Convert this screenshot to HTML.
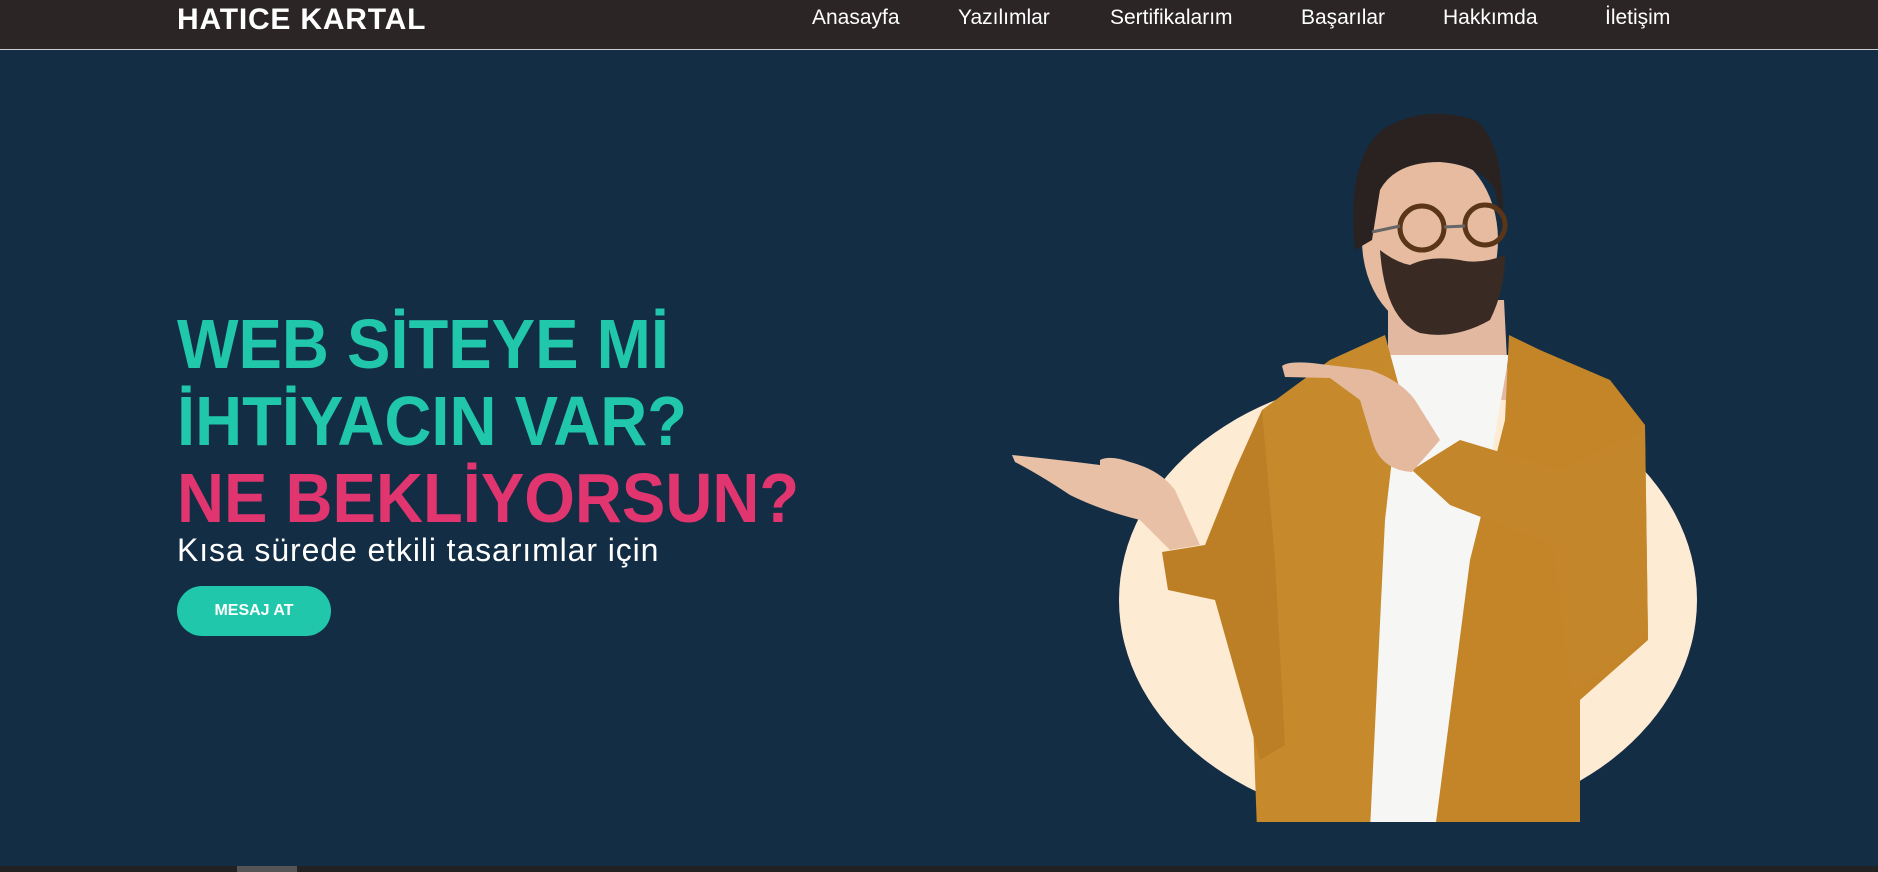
<!DOCTYPE html>
<html><head><meta charset="utf-8"><style>
*{margin:0;padding:0;box-sizing:border-box}
html,body{width:1878px;height:872px;overflow:hidden;background:#132d45;font-family:"Liberation Sans",sans-serif}
header{position:absolute;left:0;top:0;width:1878px;height:50px;background:#2b2526;border-bottom:1px solid #cfcfcf}
.logo{position:absolute;left:177px;top:3px;font-weight:bold;font-size:30px;color:#fff;letter-spacing:0.8px}
nav a{position:absolute;top:6px;color:#fff;font-size:21px;text-decoration:none}
h1{position:absolute;left:177px;top:306px;font-size:70px;line-height:77px;font-weight:bold;color:#21c7aa;transform:scaleX(0.93);transform-origin:0 0;white-space:nowrap}
h1 span{color:#e0356f}
.sub{position:absolute;left:177px;top:532px;font-size:32px;color:#fff;letter-spacing:0.9px}
.btn{position:absolute;left:177px;top:586px;width:154px;height:50px;border-radius:25px;background:#21c7aa;color:#fff;font-weight:bold;font-size:16px;text-align:center;line-height:50px}
.bar{position:absolute;left:0;top:866px;width:1878px;height:6px;background:#222}
.thumb{position:absolute;left:237px;top:866px;width:60px;height:6px;background:#555}
svg{position:absolute;left:0;top:0}
</style></head><body>
<header><div class="logo">HATICE KARTAL</div>
<nav><a style="left:812px">Anasayfa</a><a style="left:958px">Yazılımlar</a><a style="left:1110px">Sertifikalarım</a><a style="left:1301px">Başarılar</a><a style="left:1443px">Hakkımda</a><a style="left:1605px">İletişim</a></nav></header>
<h1>WEB SİTEYE Mİ<br>İHTİYACIN VAR?<br><span>NE BEKLİYORSUN?</span></h1>
<div class="sub">Kısa sürede etkili tasarımlar için</div>
<div class="btn">MESAJ AT</div>
<svg width="1878" height="866" viewBox="0 0 1878 866">
<clipPath id="c"><rect x="0" y="51" width="1878" height="771"/></clipPath>
<g clip-path="url(#c)">
<ellipse cx="1408" cy="600" rx="289" ry="225" fill="#fdebd4"/>
<path d="M1388 300 L1504 300 L1509 400 L1388 400Z" fill="#e2b9a0"/>
<path d="M1388 355 L1509 355 L1480 520 L1440 830 L1365 830 L1370 520Z" fill="#f6f6f4"/>
<path d="M1262 410 L1330 360 L1385 335 L1400 390 L1385 520 L1370 830 L1257 830 L1250 640 Z" fill="#c68a2c"/>
<path d="M1509 335 L1540 350 L1610 380 L1645 425 L1648 640 L1580 700 L1580 830 L1435 830 L1470 560 L1505 420Z" fill="#c38528"/>
<path d="M1262 410 L1235 470 L1205 545 L1162 552 L1168 590 L1215 600 L1260 760 L1285 745 L1275 560Z" fill="#bd7f25"/>
<path d="M1412 470 L1460 440 L1560 470 L1645 430 L1648 635 L1572 695 L1553 545 L1450 505Z" fill="#c4862a"/>
<path d="M1282 366 Q1290 360 1320 364 L1370 370 Q1400 380 1415 400 L1440 440 L1412 472 Q1380 470 1372 440 L1360 400 L1330 378 L1285 377Z" fill="#e4b99e"/>
<path d="M1012 455 Q1060 460 1100 465 L1100 460 Q1110 455 1130 462 Q1160 470 1175 490 L1200 545 L1170 550 Q1150 530 1140 520 Q1100 510 1070 495 Q1040 475 1015 462Z" fill="#e8c0a6"/>
<ellipse cx="1430" cy="240" rx="68" ry="90" fill="#e6bba0"/>
<path d="M1355 250 Q1345 150 1390 125 Q1430 105 1475 120 Q1505 140 1503 230 L1495 190 Q1480 165 1440 162 Q1395 162 1380 190 L1372 240Z" fill="#2a2220"/>
<path d="M1380 250 Q1385 320 1420 333 Q1455 340 1490 320 Q1505 290 1505 255 Q1480 265 1460 260 Q1430 255 1410 265 Q1395 262 1380 250Z" fill="#3a2a24"/>
<circle cx="1422" cy="228" r="22" fill="none" stroke="#5a3518" stroke-width="5"/>
<circle cx="1485" cy="225" r="20" fill="none" stroke="#5a3518" stroke-width="5"/>
<path d="M1444 227 L1465 226 M1372 232 L1400 226" stroke="#666" stroke-width="3"/>
</g>
</svg>
<div class="bar"></div><div class="thumb"></div>
</body></html>
